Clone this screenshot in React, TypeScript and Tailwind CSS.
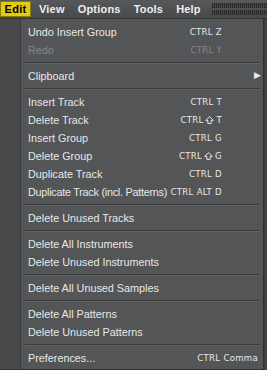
import React from "react";

type Item =
  | { sep: true }
  | { label: string; shortcut?: string; shift?: boolean; disabled?: boolean; sub?: boolean; wide?: boolean; tight?: boolean };

const items: Item[] = [
  { label: "Undo Insert Group", shortcut: "CTRL Z" },
  { label: "Redo", shortcut: "CTRL Y", disabled: true },
  { sep: true },
  { label: "Clipboard", sub: true },
  { sep: true },
  { label: "Insert Track", shortcut: "CTRL T" },
  { label: "Delete Track", shortcut: "T", shift: true },
  { label: "Insert Group", shortcut: "CTRL G" },
  { label: "Delete Group", shortcut: "G", shift: true },
  { label: "Duplicate Track", shortcut: "CTRL D" },
  { label: "Duplicate Track (incl. Patterns)", shortcut: "CTRL ALT D", tight: true },
  { sep: true },
  { label: "Delete Unused Tracks" },
  { sep: true },
  { label: "Delete All Instruments" },
  { label: "Delete Unused Instruments" },
  { sep: true },
  { label: "Delete All Unused Samples" },
  { sep: true },
  { label: "Delete All Patterns" },
  { label: "Delete Unused Patterns" },
  { sep: true },
  { label: "Preferences...", shortcut: "CTRL Comma", wide: true },
];

const ShiftIcon = () => (
  <svg width="9" height="8" viewBox="0 0 9 8" className="inline-block mx-[2px]">
    <path d="M4.5 0.7 L8.3 4.4 H6.2 V7.4 H2.8 V4.4 H0.7 Z" fill="none" stroke="currentColor" strokeWidth="1" strokeLinejoin="miter" />
  </svg>
);

const Grille = () => (
  <div className="flex flex-col gap-[2px] ml-auto w-[55px] shrink-0">
    <div className="h-[5px] bg-[repeating-linear-gradient(90deg,#2a2b2c_0px,#2a2b2c_1px,#444648_1px,#444648_2px)]" />
    <div className="h-[5px] bg-[repeating-linear-gradient(90deg,#2a2b2c_0px,#2a2b2c_1px,#444648_1px,#444648_2px)]" />
  </div>
);

export default function App() {
  return (
    <div
      className="w-[267px] h-[370px] overflow-hidden bg-[#3e4042] flex flex-col"
      style={{ fontFamily: '"Liberation Sans", Arial, sans-serif' }}
    >
      {/* menubar */}
      <div className="h-[19px] shrink-0 flex items-center bg-[linear-gradient(#56585a,#47494b)] border-b border-[#333435]">
        <div className="h-[16px] w-[31px] shrink-0 flex items-center justify-center bg-[#e1cc12] border border-[#8a7c00] text-black text-[11px] font-bold tracking-[0.3px]">
          Edit
        </div>
        <div className="flex gap-[13px] ml-[8px] text-[11px] font-bold tracking-[0.2px] text-[#eeeeee]">
          <span>View</span>
          <span>Options</span>
          <span>Tools</span>
          <span>Help</span>
        </div>
        <Grille />
      </div>

      {/* menu */}
      <div className="flex-1 flex w-[264px] bg-[#535557] border-r border-b border-[#2f3031]">
        <div className="w-[21px] shrink-0 bg-[#47494b] border-r border-[#38393a]" />
        <div className="flex-1 min-w-0 flex flex-col pt-[4px] text-[10.8px] text-[#e8e8e8] whitespace-nowrap">
          {items.map((it, i) =>
            "sep" in it ? (
              <div key={i} className="h-[8px] flex items-center px-[4px]">
                <div className="w-full h-[2px] border-t border-[#3a3b3c] border-b border-b-[#606264]" />
              </div>
            ) : (
              <div
                key={i}
                className={
                  "h-[18px] flex items-center pl-[7px] " +
                  (it.disabled ? "text-[#86888a]" : "")
                }
              >
                <span className={it.tight ? "tracking-[-0.25px]" : ""}>{it.label}</span>
                {it.shortcut && (
                  <span
                    className={
                      "ml-auto flex items-center text-[9.5px] tracking-[0.3px] " +
                      (it.wide ? "pr-[5px]" : "pr-[41px]")
                    }
                    style={{ fontFamily: '"DejaVu Sans Condensed", "Liberation Sans Narrow", sans-serif' }}
                  >
                    {it.shift && (
                      <>
                        CTRL
                        <ShiftIcon />
                      </>
                    )}
                    {it.shortcut}
                  </span>
                )}
                {it.sub && <span className="ml-auto pr-[2px] text-[9px]">▶</span>}
              </div>
            )
          )}
        </div>
      </div>
    </div>
  );
}
